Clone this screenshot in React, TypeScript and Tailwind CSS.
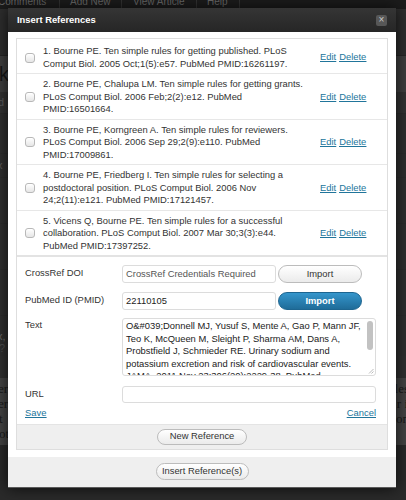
import { useState } from 'react'

type Reference = {
  id: number
  text: string
}

const references: Reference[] = [
  { id: 1, text: '1. Bourne PE. Ten simple rules for getting published. PLoS Comput Biol. 2005 Oct;1(5):e57. PubMed PMID:16261197.' },
  { id: 2, text: '2. Bourne PE, Chalupa LM. Ten simple rules for getting grants. PLoS Comput Biol. 2006 Feb;2(2):e12. PubMed PMID:16501664.' },
  { id: 3, text: '3. Bourne PE, Korngreen A. Ten simple rules for reviewers. PLoS Comput Biol. 2006 Sep 29;2(9):e110. PubMed PMID:17009861.' },
  { id: 4, text: '4. Bourne PE, Friedberg I. Ten simple rules for selecting a postdoctoral position. PLoS Comput Biol. 2006 Nov 24;2(11):e121. PubMed PMID:17121457.' },
  { id: 5, text: '5. Vicens Q, Bourne PE. Ten simple rules for a successful collaboration. PLoS Comput Biol. 2007 Mar 30;3(3):e44. PubMed PMID:17397252.' },
]

const pubmedText =
  "O&#039;Donnell MJ, Yusuf S, Mente A, Gao P, Mann JF, Teo K, McQueen M, Sleight P, Sharma AM, Dans A, Probstfield J, Schmieder RE. Urinary sodium and potassium excretion and risk of cardiovascular events. JAMA. 2011 Nov 23;306(20):2229-38. PubMed PMID:22110105."

const sans = "font-['Liberation_Sans',Arial,sans-serif] text-[9.4px] leading-[12.5px]"

function Checkbox() {
  return (
    <span className="block h-[10px] w-[10px] rounded-[3px] border border-[#b8b8b8] bg-gradient-to-b from-white to-[#e6e6e6] shadow-[inset_0_1px_0_#fff]" />
  )
}

function PillButton({ children, primary = false, className = '' }: { children: React.ReactNode; primary?: boolean; className?: string }) {
  return (
    <button
      type="button"
      className={
        primary
          ? `flex items-center justify-center rounded-full border border-[#1d6590] bg-gradient-to-b from-[#3596cc] to-[#1f6c99] ${sans} font-bold text-white ${className}`
          : `flex items-center justify-center rounded-full border border-[#bcbcbc] bg-gradient-to-b from-white to-[#ebebeb] ${sans} text-[#333] ${className}`
      }
    >
      {children}
    </button>
  )
}

function TextField({ value = '', className = '' }: { value?: string; className?: string }) {
  return (
    <div className={`flex items-center rounded-[3px] border border-[#dcdcdc] bg-white px-[3px] ${className}`}>
      {value}
    </div>
  )
}

function BackgroundPage() {
  return (
    <div className="flex h-full flex-col">
      {/* admin tabs, mostly cut off at the top edge */}
      <div className="flex h-[9px] overflow-hidden bg-[#1c1c1c] text-[10px] leading-[10px] text-[#6a6a6a]">
        <span className="-ml-[3px] -mt-[3px] w-[63px] border-r border-[#333] pl-[1px]">Comments</span>
        <span className="-mt-[3px] w-[62px] border-r border-[#333] pl-[10px]">Add New</span>
        <span className="-mt-[3px] w-[75px] border-r border-[#333] pl-[11px]">View Article</span>
        <span className="-mt-[3px] w-[43px] border-r border-[#333] pl-[10px]">Help</span>
      </div>
      <div className="h-[47px] border-b border-[#262626] bg-[#2e2e2e]" />
      <div className="flex h-[36px] items-center bg-[#3f3f3f] text-[20px] leading-none text-[#161616]">
        <span className="-ml-[1px]">k</span>
      </div>
      <div className="flex h-[22px] items-center border-b border-[#2c2c2c] bg-[#333] text-[11px] text-[#5c5c5c]">
        <span className="-ml-[2px]">d</span>
      </div>
      <div className="h-[40px] border-b border-[#2c2c2c] bg-[#2f2f2f]" />
      <div className="flex h-[24px] items-center border-b border-[#2c2c2c] bg-[#2f2f2f] text-[11px] text-[#5c5c5c]">
        <span className="-ml-[3px]">x</span>
      </div>
      <div className="h-[46px] border-b border-[#2c2c2c] bg-[#2f2f2f]" />
      <div className="h-[46px] border-b border-[#2c2c2c] bg-[#2f2f2f]" />
      <div className="h-[46px] border-b border-[#2c2c2c] bg-[#2f2f2f]" />
      <div className="flex h-[40px] flex-col justify-end bg-[#2f2f2f] pb-[2px] text-[11px] leading-[12px] text-[#6a6a6a]">
        <span className="-ml-[3px]">x,</span>
        <span className="-ml-[1px] text-[#4e4e4e]">?</span>
      </div>
      <div className="h-[22px] bg-[#303030]" />
      <div className="flex flex-col bg-[#444] pt-[3px] pb-[4px] font-['Liberation_Serif','Times_New_Roman',serif] text-[13px] leading-[15px] text-[#191919]">
        <div className="flex justify-between">
          <span className="-ml-[2px]">er</span>
          <span className="-mr-[3px]">les</span>
        </div>
        <div className="flex justify-between">
          <span className="-ml-[2px]">er</span>
          <span className="-mr-[2px]">r i</span>
        </div>
        <div className="flex justify-between">
          <span className="-ml-[1px]">t</span>
          <span className="-mr-[3px]">on</span>
        </div>
        <div className="flex justify-between">
          <span className="-ml-[1px]">ot</span>
          <span />
        </div>
      </div>
      <div className="flex-1 bg-[#2a2a2a]" />
    </div>
  )
}

export default function App() {
  const [checked, setChecked] = useState<number[]>([])

  const toggle = (id: number) =>
    setChecked((prev) => (prev.includes(id) ? prev.filter((x) => x !== id) : [...prev, id]))

  return (
    <div className={`relative h-[500px] w-[406px] overflow-hidden bg-[#2c2c2c] ${sans}`}>
      <BackgroundPage />

      {/* modal sits over the dimmed page */}
      <div className="absolute left-[8px] top-[8px] w-[388px] shadow-[0_0_14px_rgba(0,0,0,0.75)]">
        <div className="flex h-[24px] items-center justify-between bg-gradient-to-b from-[#353535] to-[#262626] pl-[9px] pr-[9px]">
          <span className="text-[9.4px] font-bold text-white">Insert References</span>
          <span className="flex h-[11px] w-[11px] items-center justify-center rounded-[2px] bg-[#575757] text-[10px] leading-none text-[#c8c8c8]">
            ×
          </span>
        </div>

        <div className="bg-white px-[8px] pt-[6px] pb-[7px]">
          <div className="border border-[#dedede]">
            <div className="border-b-2 border-[#e3e3e3]">
              {references.map((ref, i) => (
                <div
                  key={ref.id}
                  className={`flex items-center text-[#333] ${i === 0 ? 'pt-[6px] pb-[3px]' : 'pt-[4px] pb-[3px]'} ${
                    i < references.length - 1 ? 'border-b border-[#e7e7e7]' : ''
                  }`}
                >
                  <label className="flex w-[26px] shrink-0 justify-center" onClick={() => toggle(ref.id)}>
                    <Checkbox />
                  </label>
                  <p className="w-[267px] shrink-0">{ref.text}</p>
                  <div className="ml-[10px] flex gap-[3px] text-[#21759b] underline">
                    <a href="#">Edit</a>
                    <a href="#">Delete</a>
                  </div>
                </div>
              ))}
            </div>

            <div className="flex flex-col px-[8px] pt-[8px] pb-[4px] text-[#333]">
              <div className="flex items-start">
                <span className="w-[97px] pt-[2px]">CrossRef DOI</span>
                <TextField value="CrossRef Credentials Required" className="h-[18px] w-[154px] text-[#555]" />
                <PillButton className="ml-[2px] h-[18px] w-[84px]">Import</PillButton>
              </div>

              <div className="mt-[9px] flex items-start">
                <span className="w-[97px] pt-[2px]">PubMed ID (PMID)</span>
                <TextField value="22110105" className="h-[18px] w-[154px] text-[#222]" />
                <PillButton primary className="ml-[2px] h-[18px] w-[84px]">
                  Import
                </PillButton>
              </div>

              <div className="mt-[8px] flex items-start">
                <span className="w-[97px] pt-[1px]">Text</span>
                <div className="relative h-[58px] w-[254px] overflow-hidden rounded-[3px] border border-[#dcdcdc] pl-[3px] pr-[12px] pt-[1px] text-[#222]">
                  <p>{pubmedText}</p>
                  <span className="absolute right-[2px] top-[2px] h-[29px] w-[6px] rounded-full bg-[#c2c2c2]" />
                  <svg className="absolute bottom-[1px] right-[1px]" width="6" height="6" viewBox="0 0 6 6">
                    <path d="M5.5 1 L1 5.5 M5.5 3.5 L3.5 5.5" stroke="#aaa" strokeWidth="0.8" />
                  </svg>
                </div>
              </div>

              <div className="mt-[10px] flex items-center">
                <span className="w-[97px]">URL</span>
                <TextField className="h-[17px] w-[254px]" />
              </div>

              <div className="mt-[4px] flex w-[351px] justify-between text-[#21759b] underline">
                <a href="#">Save</a>
                <a href="#">Cancel</a>
              </div>
            </div>

            <div className="flex h-[25px] items-center justify-center border-t border-[#e4e4e4] bg-[#efefef]">
              <PillButton className="h-[16px] w-[90px]">New Reference</PillButton>
            </div>
          </div>
        </div>

        <div className="flex h-[31px] items-center justify-center border-b border-[#5a5a5a] bg-[#efefef]">
          <PillButton className="h-[17px] w-[93px]">Insert Reference(s)</PillButton>
        </div>
      </div>

      {checked.length > 0 && <span className="sr-only">{checked.length} selected</span>}
    </div>
  )
}
